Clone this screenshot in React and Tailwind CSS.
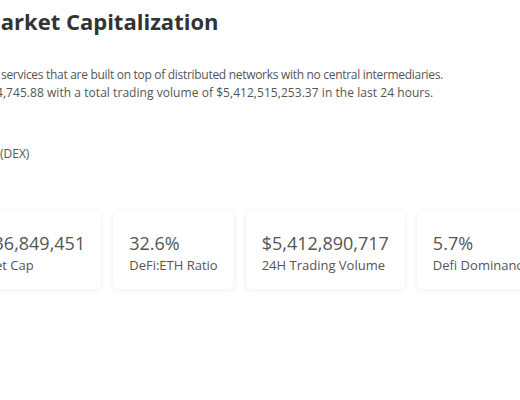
export default function App() {
  const cards = [
    { pre: "$2,1", v: "36,849,451", l: "Market Cap", first: true },
    { v: "32.6%", l: "DeFi:ETH Ratio" },
    { v: "$5,412,890,717", l: "24H Trading Volume" },
    { v: "5.7%", l: "Defi Dominance" },
    { v: "Uniswap", l: "Top Coin" },
  ];
  return (
    <div className="w-[520px] h-[400px] overflow-hidden bg-white font-['Open_Sans',sans-serif]">
      <div className="pt-[5px]">
        <h1 className="-ml-[20px] whitespace-nowrap text-[22px] leading-8 font-bold text-[#333333]">
          Market Capitalization
        </h1>
        <div className="mt-[29px] text-[12px] leading-[18px] text-[#555555] whitespace-nowrap">
          <div className="ml-[1px] tracking-[-0.3px]">services that are built on top of distributed networks with no central intermediaries.</div>
          <div className="-ml-[4px] tracking-[0.05px]">4,745.88 with a total trading volume of $5,412,515,253.37 in the last 24 hours.</div>
        </div>
        <div className="mt-[43px] text-[12px] leading-[18px] text-[#555555] whitespace-nowrap">(DEX)</div>
        <div className="mt-[48px] flex gap-3 pb-6">
          {cards.map((c, i) => (
            <div
              key={i}
              className={`shrink-0 rounded-md bg-white px-4 pt-[19px] pb-[15px] shadow-[0_1px_6px_rgba(0,0,0,0.08)] ${c.first ? "-ml-[52px]" : ""}`}
            >
              <div className="whitespace-nowrap text-[18px] leading-[26px] text-[#555555]">
                {c.pre && <span className="tracking-[-1.5px]">{c.pre}</span>}
                {c.v}
              </div>
              <div className="whitespace-nowrap text-[13px] leading-[18px] text-[#555555]">{c.l}</div>
            </div>
          ))}
        </div>
      </div>
    </div>
  );
}
